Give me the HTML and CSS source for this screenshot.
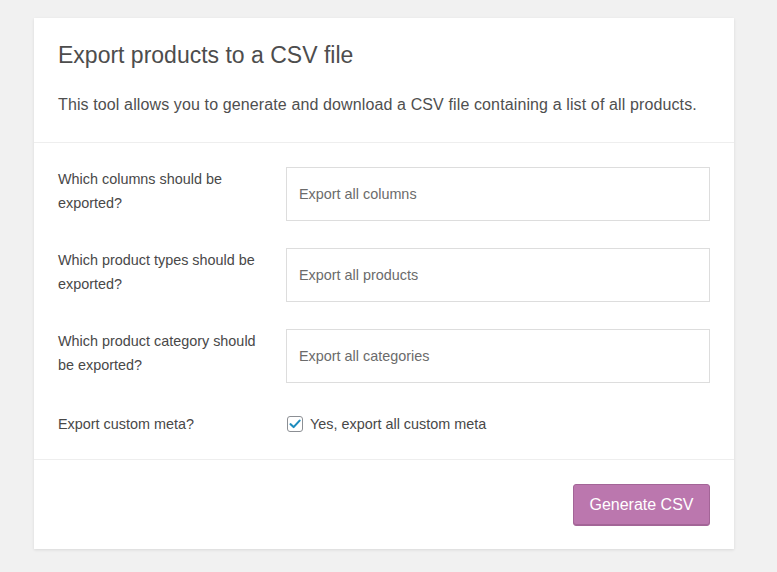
FILE: index.html
```html
<!DOCTYPE html>
<html lang="en">
<head>
<meta charset="utf-8">
<title>Export products</title>
<link rel="stylesheet" href="styles.css">
</head>
<body>
<div class="card">
  <header class="card-header">
    <h2 class="title">Export products to a CSV file</h2>
    <p class="desc">This tool allows you to generate and download a CSV file containing a list of all products.</p>
  </header>
  <section class="card-body">
    <div class="row">
      <div class="label">Which columns should be exported?</div>
      <div class="field"><div class="select">Export all columns</div></div>
    </div>
    <div class="row">
      <div class="label">Which product types should be exported?</div>
      <div class="field"><div class="select">Export all products</div></div>
    </div>
    <div class="row">
      <div class="label">Which product category should be exported?</div>
      <div class="field"><div class="select">Export all categories</div></div>
    </div>
    <div class="row row-check">
      <div class="label">Export custom meta?</div>
      <div class="field check-field">
        <span class="checkbox"><svg width="12" height="12" viewBox="0 0 12 12"><path d="M1.6 6.2 L4.6 9.1 L10.6 2.6" fill="none" stroke="#1e8cbe" stroke-width="2.1" stroke-linecap="round" stroke-linejoin="round"/></svg></span>
        <span class="check-text">Yes, export all custom meta</span>
      </div>
    </div>
  </section>
  <footer class="card-footer">
    <button class="btn" type="button">Generate CSV</button>
  </footer>
</div>
</body>
</html>
```

FILE: styles.css
```css
html, body {
  margin: 0;
  padding: 0;
}
body {
  background: #f1f1f1;
  font-family: "Liberation Sans", Arial, sans-serif;
  color: #444;
  height: 572px;
}
.card {
  margin: 18px 0 0 34px;
  width: 700px;
  background: #fff;
  box-shadow: 0 1px 3px rgba(0, 0, 0, 0.1);
}
.card-header {
  padding: 23px 24px 25px;
  border-bottom: 1px solid #eee;
}
.title {
  margin: 0;
  font-size: 23px;
  font-weight: 400;
  line-height: 28px;
  color: #4d4d4d;
}
.desc {
  margin: 24px 0 0;
  font-size: 16px;
  line-height: 24px;
  color: #4f4f4f;
  letter-spacing: 0.12px;
}
.card-body {
  padding: 24px 24px 21px;
  display: flex;
  flex-direction: column;
  gap: 27px;
}
.row {
  display: flex;
  align-items: flex-start;
}
.label {
  width: 208px;
  padding-right: 20px;
  font-size: 14.4px;
  line-height: 24px;
  color: #484848;
}
.field {
  flex: 1;
}
.select {
  height: 52px;
  border: 1px solid #ddd;
  padding: 0 12px;
  display: flex;
  align-items: center;
  font-size: 14.4px;
  color: #6b6b6b;
}
.row-check .label {
  line-height: 28px;
}
.check-field {
  display: flex;
  align-items: center;
  height: 28px;
}
.checkbox {
  box-sizing: border-box;
  width: 16px;
  height: 16px;
  margin-left: 1px;
  border: 1px solid #8c8f94;
  border-radius: 3px;
  display: flex;
  align-items: center;
  justify-content: center;
  background: #fff;
}
.check-text {
  margin-left: 7px;
  font-size: 14.4px;
  color: #484848;
}
.card-footer {
  border-top: 1px solid #eee;
  padding: 24px 24px 23px;
  display: flex;
  justify-content: flex-end;
}
.btn {
  height: 42px;
  padding: 0 15.5px;
  background: #bb77ae;
  border: 1px solid #a36597;
  border-radius: 3px;
  box-shadow: inset 0 -1px 0 #a36597;
  color: #fff;
  font-family: "Liberation Sans", Arial, sans-serif;
  font-size: 16px;
  cursor: pointer;
}
```
